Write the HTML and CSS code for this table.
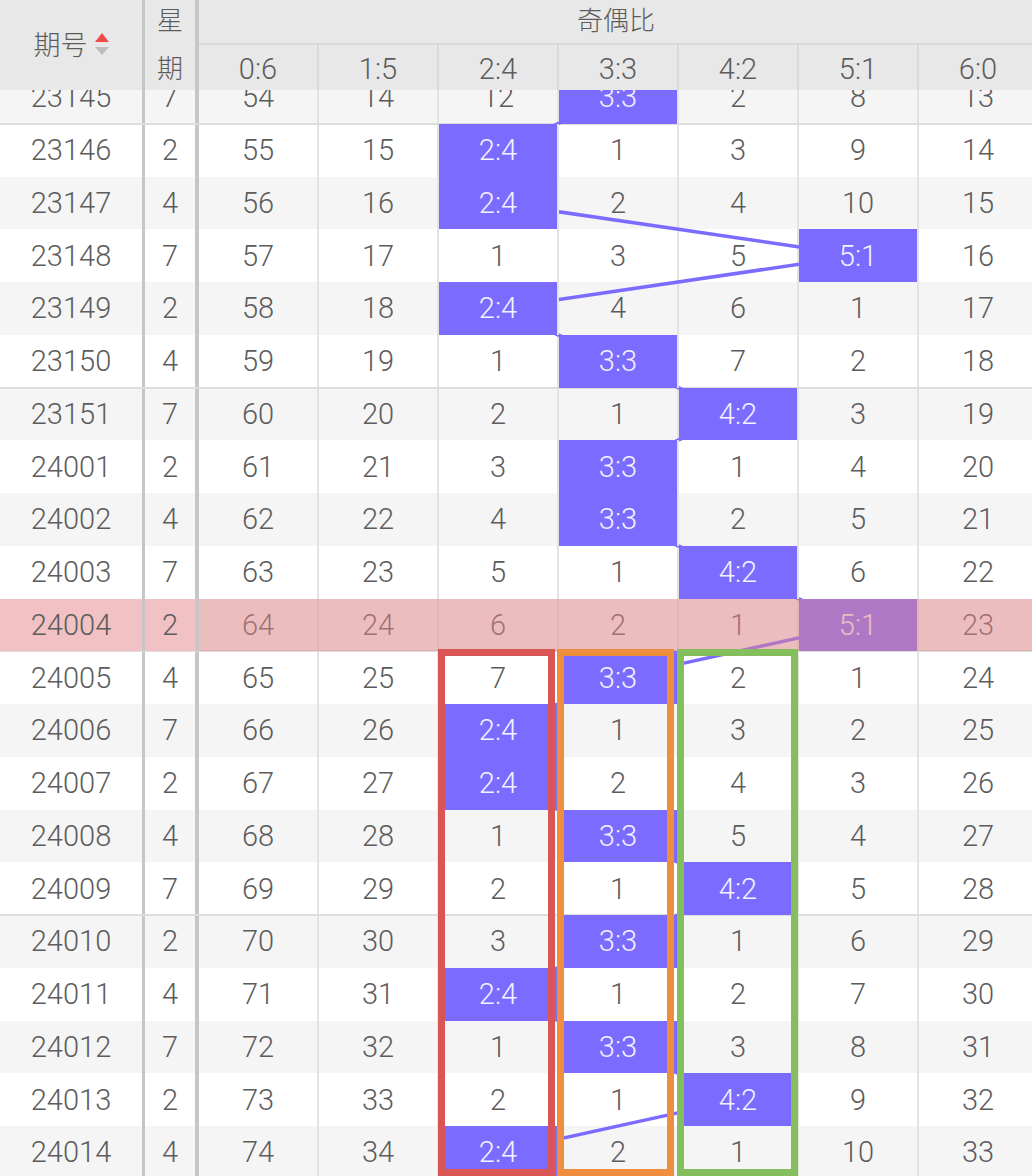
FILE: index.html
```html
<!DOCTYPE html>
<html lang="zh">
<head>
<meta charset="utf-8">
<title>奇偶比</title>
<link rel="stylesheet" href="styles.css">
</head>
<body>
<div class="page">
  <div class="head">
    <div class="h h-id"><span>期号</span><span class="sort"><i class="up"></i><i class="down"></i></span></div>
    <div class="h h-wk">星期</div>
    <div class="h h-group">奇偶比</div>
    <div class="h h-r">0:6</div>
    <div class="h h-r">1:5</div>
    <div class="h h-r">2:4</div>
    <div class="h h-r">3:3</div>
    <div class="h h-r">4:2</div>
    <div class="h h-r">5:1</div>
    <div class="h h-r">6:0</div>
  </div>
  <div class="body">
    <div class="rows">
      <div class="row sep"><div class="c id">23145</div><div class="c wk">7</div><div class="c">54</div><div class="c">14</div><div class="c">12</div><div class="c hit">3:3</div><div class="c">2</div><div class="c">8</div><div class="c">13</div></div>
      <div class="row"><div class="c id">23146</div><div class="c wk">2</div><div class="c">55</div><div class="c">15</div><div class="c hit">2:4</div><div class="c">1</div><div class="c">3</div><div class="c">9</div><div class="c">14</div></div>
      <div class="row"><div class="c id">23147</div><div class="c wk">4</div><div class="c">56</div><div class="c">16</div><div class="c hit">2:4</div><div class="c">2</div><div class="c">4</div><div class="c">10</div><div class="c">15</div></div>
      <div class="row"><div class="c id">23148</div><div class="c wk">7</div><div class="c">57</div><div class="c">17</div><div class="c">1</div><div class="c">3</div><div class="c">5</div><div class="c hit">5:1</div><div class="c">16</div></div>
      <div class="row"><div class="c id">23149</div><div class="c wk">2</div><div class="c">58</div><div class="c">18</div><div class="c hit">2:4</div><div class="c">4</div><div class="c">6</div><div class="c">1</div><div class="c">17</div></div>
      <div class="row sep"><div class="c id">23150</div><div class="c wk">4</div><div class="c">59</div><div class="c">19</div><div class="c">1</div><div class="c hit">3:3</div><div class="c">7</div><div class="c">2</div><div class="c">18</div></div>
      <div class="row"><div class="c id">23151</div><div class="c wk">7</div><div class="c">60</div><div class="c">20</div><div class="c">2</div><div class="c">1</div><div class="c hit">4:2</div><div class="c">3</div><div class="c">19</div></div>
      <div class="row"><div class="c id">24001</div><div class="c wk">2</div><div class="c">61</div><div class="c">21</div><div class="c">3</div><div class="c hit">3:3</div><div class="c">1</div><div class="c">4</div><div class="c">20</div></div>
      <div class="row"><div class="c id">24002</div><div class="c wk">4</div><div class="c">62</div><div class="c">22</div><div class="c">4</div><div class="c hit">3:3</div><div class="c">2</div><div class="c">5</div><div class="c">21</div></div>
      <div class="row"><div class="c id">24003</div><div class="c wk">7</div><div class="c">63</div><div class="c">23</div><div class="c">5</div><div class="c">1</div><div class="c hit">4:2</div><div class="c">6</div><div class="c">22</div></div>
      <div class="row sep hl"><div class="c id">24004</div><div class="c wk">2</div><div class="c">64</div><div class="c">24</div><div class="c">6</div><div class="c">2</div><div class="c">1</div><div class="c hit">5:1</div><div class="c">23</div></div>
      <div class="row"><div class="c id">24005</div><div class="c wk">4</div><div class="c">65</div><div class="c">25</div><div class="c">7</div><div class="c hit">3:3</div><div class="c">2</div><div class="c">1</div><div class="c">24</div></div>
      <div class="row"><div class="c id">24006</div><div class="c wk">7</div><div class="c">66</div><div class="c">26</div><div class="c hit">2:4</div><div class="c">1</div><div class="c">3</div><div class="c">2</div><div class="c">25</div></div>
      <div class="row"><div class="c id">24007</div><div class="c wk">2</div><div class="c">67</div><div class="c">27</div><div class="c hit">2:4</div><div class="c">2</div><div class="c">4</div><div class="c">3</div><div class="c">26</div></div>
      <div class="row"><div class="c id">24008</div><div class="c wk">4</div><div class="c">68</div><div class="c">28</div><div class="c">1</div><div class="c hit">3:3</div><div class="c">5</div><div class="c">4</div><div class="c">27</div></div>
      <div class="row sep"><div class="c id">24009</div><div class="c wk">7</div><div class="c">69</div><div class="c">29</div><div class="c">2</div><div class="c">1</div><div class="c hit">4:2</div><div class="c">5</div><div class="c">28</div></div>
      <div class="row"><div class="c id">24010</div><div class="c wk">2</div><div class="c">70</div><div class="c">30</div><div class="c">3</div><div class="c hit">3:3</div><div class="c">1</div><div class="c">6</div><div class="c">29</div></div>
      <div class="row"><div class="c id">24011</div><div class="c wk">4</div><div class="c">71</div><div class="c">31</div><div class="c hit">2:4</div><div class="c">1</div><div class="c">2</div><div class="c">7</div><div class="c">30</div></div>
      <div class="row"><div class="c id">24012</div><div class="c wk">7</div><div class="c">72</div><div class="c">32</div><div class="c">1</div><div class="c hit">3:3</div><div class="c">3</div><div class="c">8</div><div class="c">31</div></div>
      <div class="row"><div class="c id">24013</div><div class="c wk">2</div><div class="c">73</div><div class="c">33</div><div class="c">2</div><div class="c">1</div><div class="c hit">4:2</div><div class="c">9</div><div class="c">32</div></div>
      <div class="row sep"><div class="c id">24014</div><div class="c wk">4</div><div class="c">74</div><div class="c">34</div><div class="c hit">2:4</div><div class="c">2</div><div class="c">1</div><div class="c">10</div><div class="c">33</div></div>
      <svg class="trend" width="1039" height="1108" viewBox="0 0 1039 1108">
        <polyline points="618,26.4 498,79.1 498,131.9 858,184.6 498,237.4 618,290.1 738,342.9 618,395.6 618,448.4 738,501.1 858,553.9 618,606.6 498,659.4 498,712.1 618,764.9 738,817.6 618,870.4 498,923.1 618,975.9 738,1028.6 498,1081.4" fill="none" stroke="#7b6bff" stroke-width="3.5" stroke-linejoin="round"/>
      </svg>
    </div>
    <div class="box box-red"></div>
    <div class="box box-orange"></div>
    <div class="box box-green"></div>
  </div>
</div>
</body>
</html>
```

FILE: styles.css
```css
html, body {
  margin: 0;
  padding: 0;
  background: #ffffff;
  overflow: hidden;
}

.page {
  width: 1032px;
  height: 1176px;
  overflow: hidden;
  font-family: Roboto, "Noto Sans CJK SC", sans-serif;
  font-weight: 300;
  color: #5c5c5c;
}

.head {
  display: grid;
  grid-template-columns: 145px 54px repeat(7, 120px);
  grid-template-rows: 45px 45px;
  width: 1039px;
  background: #e8e8e8;
  font-size: 27px;
  color: #5c5c5c;
}

.h {
  display: flex;
  align-items: center;
  justify-content: center;
  box-sizing: border-box;
}

.h-id {
  grid-row: 1 / 3;
  grid-column: 1;
  border-right: 3px solid #c6c6c6;
  gap: 7px;
  padding-bottom: 4px;
}

.sort {
  display: flex;
  flex-direction: column;
  gap: 5px;
  margin-top: 2px;
}

.sort i {
  display: block;
  width: 0;
  height: 0;
  border-left: 7px solid transparent;
  border-right: 7px solid transparent;
}

.sort .up {
  border-bottom: 9px solid #ee4a4a;
}

.sort .down {
  border-top: 8px solid #bdbdbd;
}

.h-wk {
  grid-row: 1 / 3;
  grid-column: 2;
  border-right: 4px solid #c6c6c6;
  line-height: 48px;
  text-align: center;
  padding: 0 1px;
  display: block;
  font-size: 26px;
  margin-top: -3px;
}

.h-group {
  grid-row: 1;
  grid-column: 3 / 10;
  border-bottom: 2px solid #d9d9d9;
  justify-content: flex-start;
  padding-left: 378px;
  padding-bottom: 6px;
  font-size: 26px;
}

.h-r {
  grid-row: 2;
  border-right: 2px solid #d9d9d9;
  font-size: 29px;
  padding-top: 2px;
}

.body {
  position: relative;
  height: 1086px;
  overflow: hidden;
}

.rows {
  position: relative;
  z-index: 0;
  margin-top: -19px;
  width: 1039px;
}

.row {
  position: relative;
  display: grid;
  grid-template-columns: 145px 54px repeat(7, 120px);
  height: 52.75px;
  box-sizing: border-box;
  background: #ffffff;
  font-size: 29px;
}

.row:nth-child(odd) {
  background: #f5f5f5;
}

.row.sep::before {
  content: "";
  position: absolute;
  left: 0;
  right: 0;
  bottom: -1px;
  height: 2px;
  background: #dddddd;
  z-index: 1;
}

.c {
  display: flex;
  align-items: center;
  justify-content: center;
  box-sizing: border-box;
  border-right: 2px solid #e3e3e3;
}

.c.id {
  border-right: 3px solid #c6c6c6;
}

.c.wk {
  border-right: 4px solid #c6c6c6;
}

.c.hit {
  position: relative;
  z-index: 2;
  background: #7b6bff;
  background-clip: padding-box;
  color: #f4f2ff;
}

.trend {
  position: absolute;
  left: 0;
  top: 0;
  z-index: 1;
  pointer-events: none;
}

.row.hl::after {
  content: "";
  position: absolute;
  left: 0;
  top: 0;
  right: 0;
  bottom: 0;
  background: rgba(227, 133, 137, 0.5);
  z-index: 3;
}

.row.hl .c.id,
.row.hl .c.wk {
  position: relative;
  z-index: 4;
  background: #f1c1c3;
}

.box {
  position: absolute;
  top: 559px;
  height: 527px;
  box-sizing: border-box;
  border: 7px solid;
  z-index: 5;
}

.box-red {
  left: 438px;
  width: 117px;
  border-color: #d95556;
}

.box-orange {
  left: 557px;
  width: 117px;
  border-color: #ee8e3e;
}

.box-green {
  left: 677px;
  width: 121px;
  border-color: #85bf5d;
}
```
